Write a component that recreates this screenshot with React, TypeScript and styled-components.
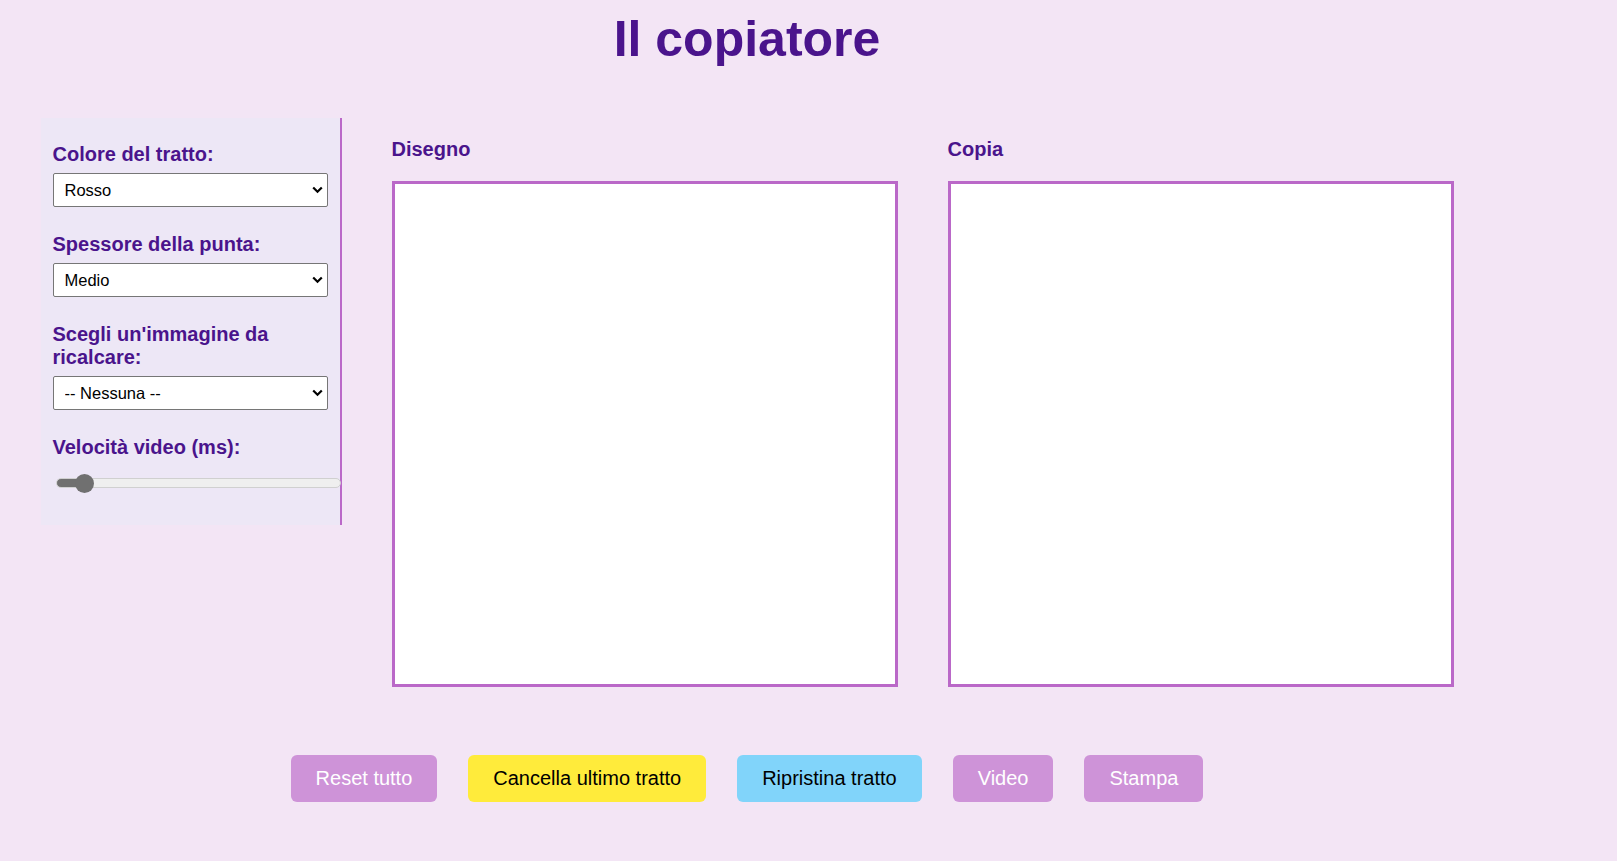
import React from "react";
import styled, { createGlobalStyle } from "styled-components";

const GlobalStyle = createGlobalStyle`
  html, body {
    margin: 0;
    padding: 0;
    background: #f3e5f5;
    font-family: "Liberation Sans", Arial, sans-serif;
  }
  * { box-sizing: border-box; }
`;

const Page = styled.div`
  width: 1494px;
  min-height: 861px;
  display: flex;
  flex-direction: column;
  align-items: center;
`;

const Title = styled.h1`
  margin: 11px 0 0;
  font-size: 50px;
  line-height: 57px;
  font-weight: 700;
  color: #4a148c;
`;

const Workspace = styled.div`
  margin-top: 50px;
  display: flex;
  align-items: flex-start;
  gap: 50px;
`;

const Sidebar = styled.aside`
  width: 301px;
  padding: 25px 12px 37px 12px;
  background: #ede7f6;
  border-right: 2px solid #ba68c8;
`;

const Field = styled.div`
  margin-bottom: 26px;
`;

const Label = styled.label`
  display: block;
  font-size: 20px;
  line-height: 23px;
  font-weight: 700;
  color: #4a148c;
  margin-bottom: 7px;
`;

const SelectWrap = styled.div`
  position: relative;
  width: 275px;
`;

const Select = styled.select`
  appearance: none;
  -webkit-appearance: none;
  display: block;
  width: 100%;
  height: 34px;
  padding: 0 30px 0 11px;
  font-family: "Liberation Sans", Arial, sans-serif;
  font-size: 16.5px;
  color: #000;
  background: #fff;
  border: 1px solid #767676;
  border-radius: 2px;
`;

const Chevron = styled.svg`
  position: absolute;
  right: 5px;
  top: 13px;
  width: 11px;
  height: 8px;
  pointer-events: none;
`;

const Range = styled.input<{ $fill: number }>`
  -webkit-appearance: none;
  appearance: none;
  display: block;
  width: 285px;
  height: 10px;
  margin: 19px 0 0 3px;
  border-radius: 5px;
  border: 1px solid #d0d0d0;
  background: linear-gradient(
    to right,
    #707070 0,
    #707070 ${(p) => p.$fill}%,
    #efefef ${(p) => p.$fill}%,
    #efefef 100%
  );
  outline: none;

  &::-webkit-slider-thumb {
    -webkit-appearance: none;
    appearance: none;
    width: 19px;
    height: 19px;
    border-radius: 50%;
    background: #707070;
    border: none;
  }
`;

const Boards = styled.div`
  display: flex;
  gap: 50px;
  margin-top: 20px;
`;

const Board = styled.div`
  display: flex;
  flex-direction: column;
`;

const BoardTitle = styled.h3`
  margin: 0 0 20px;
  font-size: 20px;
  line-height: 23px;
  font-weight: 700;
  color: #4a148c;
`;

const Canvas = styled.canvas`
  display: block;
  width: 506px;
  height: 506px;
  background: #fff;
  border: 3px solid #ba68c8;
`;

const Actions = styled.div`
  margin-top: 68px;
  display: flex;
  gap: 31px;
`;

type Tone = "purple" | "yellow" | "blue";

const toneBg: Record<Tone, string> = {
  purple: "#ce93d8",
  yellow: "#ffeb3b",
  blue: "#81d4fa",
};

const toneFg: Record<Tone, string> = {
  purple: "#ffffff",
  yellow: "#000000",
  blue: "#000000",
};

const ActionButton = styled.button<{ $tone: Tone }>`
  height: 47px;
  padding: 0 25px;
  border: none;
  border-radius: 6px;
  font-family: "Liberation Sans", Arial, sans-serif;
  font-size: 20px;
  line-height: 23px;
  cursor: pointer;
  background: ${(p) => toneBg[p.$tone]};
  color: ${(p) => toneFg[p.$tone]};
`;

const ChevronIcon = () => (
  <Chevron viewBox="0 0 11 8">
    <path d="M1.2 1.5 L5.5 5.8 L9.8 1.5" fill="none" stroke="#000" strokeWidth="2.2" />
  </Chevron>
);

const SelectField = ({ label, options, id }: { label: string; options: string[]; id: string }) => (
  <Field>
    <Label htmlFor={id}>{label}</Label>
    <SelectWrap>
      <Select id={id} defaultValue={options[0]}>
        {options.map((o) => (
          <option key={o}>{o}</option>
        ))}
      </Select>
      <ChevronIcon />
    </SelectWrap>
  </Field>
);

export default function App() {
  const min = 0;
  const max = 100;
  const value = 7;
  const fill = 10;
  return (
    <>
      <GlobalStyle />
      <Page>
        <Title>Il copiatore</Title>
        <Workspace>
          <Sidebar>
            <SelectField id="colore" label="Colore del tratto:" options={["Rosso", "Blu", "Verde", "Nero"]} />
            <SelectField id="spessore" label="Spessore della punta:" options={["Medio", "Sottile", "Spesso"]} />
            <SelectField id="immagine" label="Scegli un'immagine da ricalcare:" options={["-- Nessuna --"]} />
            <Label htmlFor="velocita" style={{ marginBottom: 0 }}>Velocità video (ms):</Label>
            <Range id="velocita" type="range" min={min} max={max} defaultValue={value} $fill={fill} />
          </Sidebar>
          <Boards>
            <Board>
              <BoardTitle>Disegno</BoardTitle>
              <Canvas width={500} height={500} />
            </Board>
            <Board>
              <BoardTitle>Copia</BoardTitle>
              <Canvas width={500} height={500} />
            </Board>
          </Boards>
        </Workspace>
        <Actions>
          <ActionButton $tone="purple">Reset tutto</ActionButton>
          <ActionButton $tone="yellow">Cancella ultimo tratto</ActionButton>
          <ActionButton $tone="blue">Ripristina tratto</ActionButton>
          <ActionButton $tone="purple">Video</ActionButton>
          <ActionButton $tone="purple">Stampa</ActionButton>
        </Actions>
      </Page>
    </>
  );
}
